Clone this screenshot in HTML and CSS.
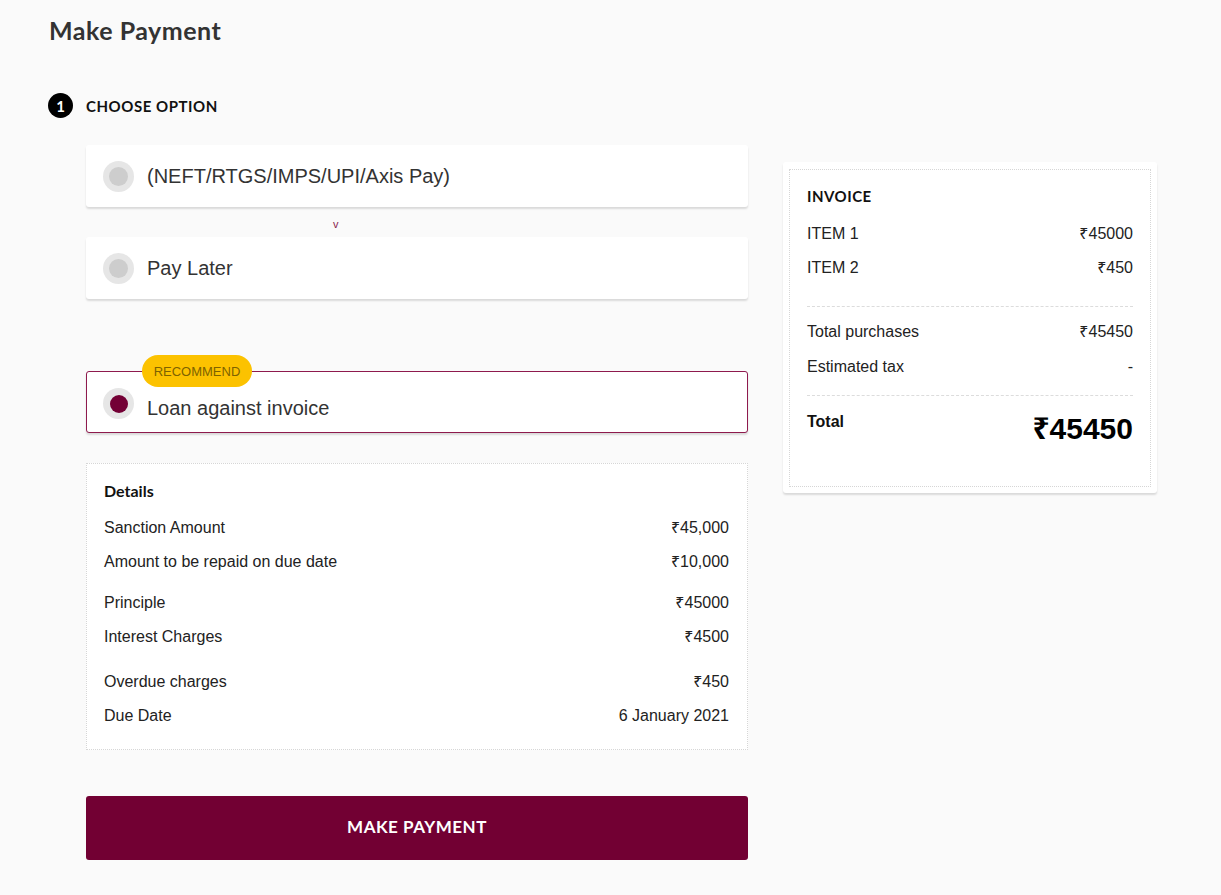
FILE: index.html
```html
<!DOCTYPE html>
<html lang="en">
<head>
<meta charset="utf-8">
<title>Make Payment</title>
<link rel="stylesheet" href="styles.css">
</head>
<body>
<div class="page">
  <h1 class="title">Make Payment</h1>
  <div class="step-header">
    <span class="step-num">1</span>
    <span class="step-label">CHOOSE OPTION</span>
  </div>
  <div class="content">
    <div class="left-col">
      <div class="option">
        <span class="radio"><span class="radio-dot"></span></span>
        <span class="option-label">(NEFT/RTGS/IMPS/UPI/Axis Pay)</span>
      </div>
      <div class="expander"><span class="expander-mark">v</span></div>
      <div class="option">
        <span class="radio"><span class="radio-dot"></span></span>
        <span class="option-label">Pay Later</span>
      </div>
      <div class="option option-selected">
        <span class="badge">RECOMMEND</span>
        <span class="radio"><span class="radio-dot radio-dot-on"></span></span>
        <span class="option-label option-label-selected">Loan against invoice</span>
      </div>
      <div class="details">
        <div class="details-title">Details</div>
        <div class="group">
          <div class="row"><span>Sanction Amount</span><span>₹45,000</span></div>
          <div class="row"><span>Amount to be repaid on due date</span><span>₹10,000</span></div>
        </div>
        <div class="group group-2">
          <div class="row"><span>Principle</span><span>₹45000</span></div>
          <div class="row"><span>Interest Charges</span><span>₹4500</span></div>
        </div>
        <div class="group group-3">
          <div class="row"><span>Overdue charges</span><span>₹450</span></div>
          <div class="row"><span>Due Date</span><span>6 January 2021</span></div>
        </div>
      </div>
      <button class="pay-btn" type="button">MAKE PAYMENT</button>
    </div>
    <div class="right-col">
      <div class="invoice-card">
        <div class="invoice-inner">
          <div class="invoice-title">INVOICE</div>
          <div class="inv-row inv-first"><span>ITEM 1</span><span>₹45000</span></div>
          <div class="inv-row"><span>ITEM 2</span><span>₹450</span></div>
          <div class="inv-sep inv-sep-1"></div>
          <div class="inv-row inv-after-sep"><span>Total purchases</span><span>₹45450</span></div>
          <div class="inv-row inv-tax"><span>Estimated tax</span><span>-</span></div>
          <div class="inv-sep inv-sep-2"></div>
          <div class="inv-total"><span class="inv-total-label">Total</span><span class="inv-total-value">₹45450</span></div>
        </div>
      </div>
    </div>
  </div>
</div>
</body>
</html>
```

FILE: styles.css
```css
* { box-sizing: border-box; }
html, body { margin: 0; padding: 0; }
body {
  background: #fafafa;
  font-family: "Liberation Sans", "Noto Sans", Arial, sans-serif;
  color: #222;
}
.page {
  padding: 15px 49px 0 49px;
  width: 1221px;
  height: 895px;
}
.title {
  margin: 0;
  font-family: Lato, "Liberation Sans", sans-serif;
  font-weight: 700;
  font-size: 25px;
  line-height: 30px;
  letter-spacing: 0.5px;
  color: #333;
}
.step-header {
  margin-top: 48px;
  display: flex;
  align-items: center;
  height: 25px;
}
.step-num {
  width: 25px;
  height: 25px;
  border-radius: 50%;
  background: #000;
  color: #fff;
  font-family: Lato, sans-serif;
  font-weight: 700;
  font-size: 15px;
  display: flex;
  align-items: center;
  justify-content: center;
  margin-left: -1px;
}
.step-label {
  margin-left: 13px;
  font-family: Lato, sans-serif;
  font-weight: 700;
  font-size: 15px;
  color: #111;
  letter-spacing: 0.55px;
}
.content {
  display: flex;
  align-items: flex-start;
  gap: 35px;
  margin-top: 27px;
  padding-left: 37px;
}
.left-col {
  width: 662px;
  display: flex;
  flex-direction: column;
}
.option {
  position: relative;
  height: 62px;
  background: #fff;
  border-radius: 3px;
  box-shadow: 0 2px 2px rgba(0,0,0,0.13);
  display: flex;
  align-items: center;
  padding-left: 17px;
}
.option + .option { margin-top: 72px; }
.expander + .option { margin-top: 0; }
.radio {
  width: 31px;
  height: 31px;
  border-radius: 50%;
  background: #e6e6e6;
  display: flex;
  align-items: center;
  justify-content: center;
  flex: none;
}
.radio-dot {
  width: 19px;
  height: 19px;
  border-radius: 50%;
  background: #cdcdcd;
}
.radio-dot-on {
  background: #730035;
  width: 18px;
  height: 18px;
}
.option-label {
  margin-left: 13px;
  font-family: "Liberation Sans", Arial, sans-serif;
  font-size: 20px;
  color: #333;
}
.option-selected {
  border: 1px solid #8e1a4d;
  padding-top: 3px;
  padding-left: 16px;
}
.option-label-selected { padding-top: 10px; }
.badge {
  position: absolute;
  left: 55px;
  top: -17px;
  width: 110px;
  height: 32px;
  border-radius: 16px;
  background: #fcc200;
  color: #7e6200;
  font-family: "Liberation Sans", Arial, sans-serif;
  font-size: 13px;
  display: flex;
  align-items: center;
  justify-content: center;
}
.expander {
  height: 30px;
  padding-left: 247px;
  padding-top: 3px;
  line-height: 28px;
  font-family: "Liberation Sans", sans-serif;
  font-size: 11px;
  color: #8a1f4f;
}
.details {
  margin-top: 30px;
  background: #fff;
  border: 1px dotted #d6d6d6;
  padding: 17px 18px 23px 17px;
  font-size: 16px;
}
.details-title {
  font-family: Lato, sans-serif;
  font-weight: 700;
  font-size: 16px;
  line-height: 20px;
  color: #111;
}
.group { margin-top: 17px; display: flex; flex-direction: column; gap: 14px; }
.group-2 { margin-top: 21px; }
.group-3 { margin-top: 25px; }
.row {
  display: flex;
  justify-content: space-between;
  line-height: 20px;
  color: #222;
}
.pay-btn {
  margin-top: 46px;
  height: 64px;
  border: none;
  border-radius: 3px;
  background: #720033;
  color: #fff;
  font-family: Lato, sans-serif;
  font-weight: 700;
  font-size: 17px;
  letter-spacing: 0.5px;
  padding-bottom: 4px;
  cursor: pointer;
}
.right-col {
  width: 374px;
  margin-top: 17px;
}
.invoice-card {
  background: #fff;
  border-radius: 3px;
  box-shadow: 0 2px 2px rgba(0,0,0,0.13);
  padding: 7px 6px 6px 6px;
}
.invoice-inner {
  border: 1px dotted #d6d6d6;
  padding: 16px 17px 40px 17px;
  font-size: 16px;
}
.invoice-title {
  font-family: Lato, sans-serif;
  font-weight: 700;
  font-size: 15px;
  line-height: 20px;
  letter-spacing: 0.5px;
  color: #111;
}
.inv-row {
  display: flex;
  justify-content: space-between;
  line-height: 20px;
  margin-top: 14px;
  color: #222;
}
.inv-first { margin-top: 18px; }
.inv-sep { border-top: 1px dashed #dcdcdc; }
.inv-sep-1 { margin-top: 28px; }
.inv-after-sep { margin-top: 15px; }
.inv-tax { margin-top: 15px; }
.inv-sep-2 { margin-top: 18px; }
.inv-total {
  display: flex;
  justify-content: space-between;
  align-items: flex-start;
  margin-top: 16px;
}
.inv-total-label {
  font-weight: 700;
  font-size: 16px;
  line-height: 20px;
  color: #111;
}
.inv-total-value {
  font-weight: 700;
  font-size: 30px;
  line-height: 34px;
  color: #000;
}
```
